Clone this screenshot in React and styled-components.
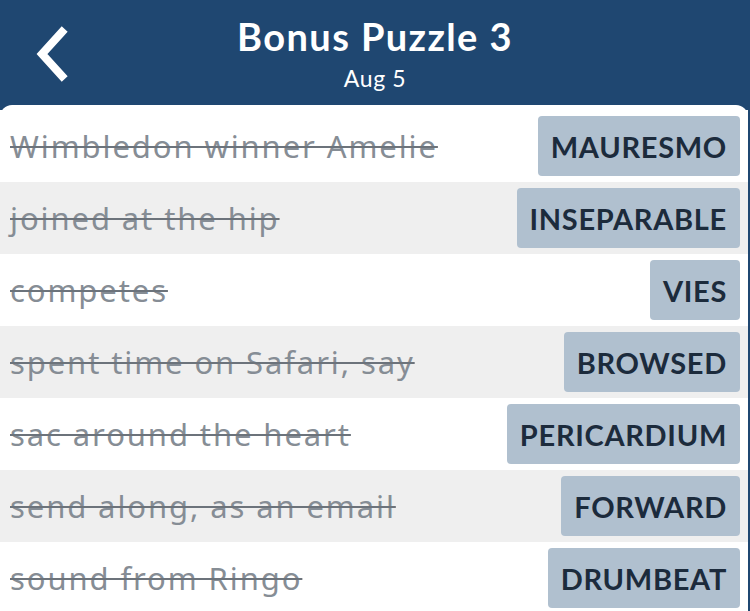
import React from 'react';
import styled, { createGlobalStyle } from 'styled-components';

const GlobalStyle = createGlobalStyle`
  html, body {
    margin: 0;
    padding: 0;
    background: #1f4771;
    overflow: hidden;
  }
`;

const Screen = styled.div`
  width: 750px;
  height: 611px;
  background-color: #1f4771;
  font-family: Lato, "Noto Sans", sans-serif;
  overflow: hidden;
`;

const Header = styled.header`
  position: relative;
  height: 105px;
  display: flex;
  flex-direction: column;
  align-items: center;
  color: #fff;
`;

const BackButton = styled.button`
  position: absolute;
  left: 30px;
  top: 26px;
  width: 48px;
  height: 56px;
  padding: 0;
  border: none;
  background: none;
  cursor: pointer;
`;

const Title = styled.h1`
  margin: 13px 0 0;
  font-size: 38px;
  font-weight: 700;
  line-height: 46px;
  letter-spacing: 1.4px;
`;

const SubTitle = styled.div`
  margin-top: 5px;
  font-size: 23px;
  line-height: 28px;
  letter-spacing: 0.6px;
`;

const Card = styled.div`
  width: 748px;
  background-color: #fff;
  border-radius: 12px 12px 0 0;
  padding-top: 5px;
`;

const Row = styled.div`
  height: 72px;
  display: flex;
  align-items: center;
  justify-content: space-between;
  padding: 0 8px 0 10px;
  background-color: ${(p) => (p.$shaded ? '#efefef' : '#fff')};
`;

const Clue = styled.span`
  font-family: "Noto Sans", Lato, sans-serif;
  font-size: 31px;
  letter-spacing: 1.9px;
  color: #868d95;
  text-decoration: line-through;
  text-decoration-color: #6c737b;
  text-decoration-thickness: 2px;
  white-space: nowrap;
`;

const Answer = styled.span`
  height: 60px;
  display: flex;
  align-items: center;
  padding: 0 13px;
  border-radius: 4px;
  background-color: #b0c0cf;
  color: #1c2b3c;
  font-size: 29px;
  font-weight: 700;
  letter-spacing: 0.7px;
`;

const entries = [
  ['Wimbledon winner Amelie', 'MAURESMO'],
  ['joined at the hip', 'INSEPARABLE'],
  ['competes', 'VIES'],
  ['spent time on Safari, say', 'BROWSED'],
  ['sac around the heart', 'PERICARDIUM'],
  ['send along, as an email', 'FORWARD'],
  ['sound from Ringo', 'DRUMBEAT'],
];

export default function App() {
  return (
    <Screen>
      <GlobalStyle />
      <Header>
        <BackButton aria-label="Back">
          <svg width="48" height="56" viewBox="0 0 48 56">
            <polyline points="32,6 12,28 32,50" fill="none" stroke="#fff" strokeWidth="8" strokeLinecap="square" />
          </svg>
        </BackButton>
        <Title>Bonus Puzzle 3</Title>
        <SubTitle>Aug 5</SubTitle>
      </Header>
      <Card>
        {entries.map(([clue, answer], i) => (
          <Row key={answer} $shaded={i % 2 === 1}>
            <Clue>{clue}</Clue>
            <Answer>{answer}</Answer>
          </Row>
        ))}
      </Card>
    </Screen>
  );
}
